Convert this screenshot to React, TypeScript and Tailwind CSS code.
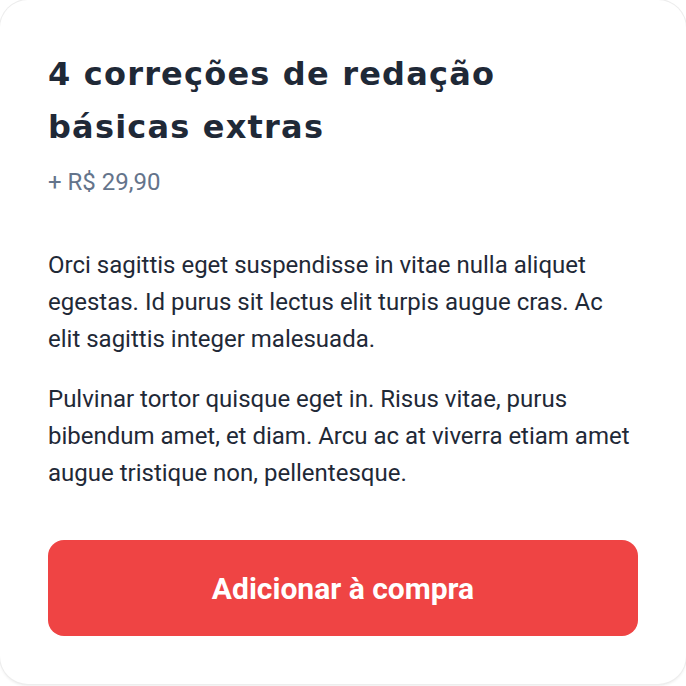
import React from "react";

export default function App() {
  return (
    <div className="w-[686px] h-[686px] bg-white font-['Roboto',sans-serif]">
      <div className="w-[686px] h-[684px] bg-white rounded-[28px] shadow-[0_0_0_1px_#ededed,0_2px_3px_rgba(0,0,0,0.08)] px-12 pt-12 pb-12 flex flex-col">
        <h1 className="font-['DejaVu_Sans',sans-serif] text-[32px] leading-[53px] font-bold text-[#1f2937] tracking-[1.2px]">
          4 correções de redação
          <br />
          básicas extras
        </h1>
        <p className="mt-3 text-[24px] leading-[32px] text-[#64748b]">
          + R$ 29,90
        </p>
        <div className="mt-[49px] text-[24px] leading-[37px] text-[#1f2937] flex flex-col gap-[23px]">
          <p>
            Orci sagittis eget suspendisse in vitae nulla aliquet egestas. Id
            purus sit lectus elit turpis augue cras. Ac elit sagittis integer
            malesuada.
          </p>
          <p>
            Pulvinar tortor quisque eget in. Risus vitae, purus bibendum amet,
            et diam. Arcu ac at viverra etiam amet augue tristique non,
            pellentesque.
          </p>
        </div>
        <button className="mt-auto h-24 w-full rounded-2xl bg-[#ef4444] text-white text-[30px] font-bold">
          Adicionar à compra
        </button>
      </div>
    </div>
  );
}
